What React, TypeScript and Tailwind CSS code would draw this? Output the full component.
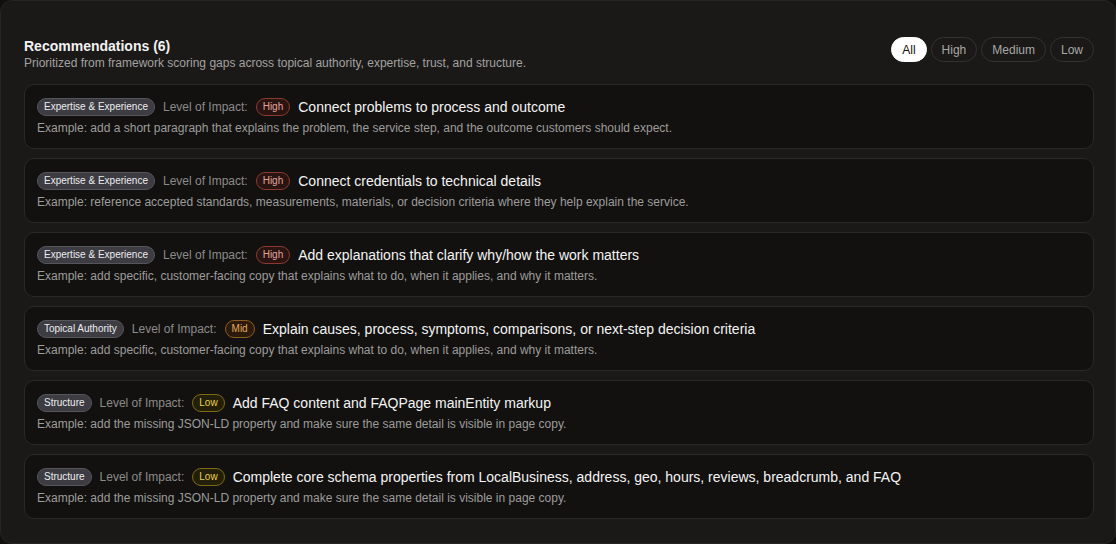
import React from "react";

type Impact = "High" | "Mid" | "Low";
type Rec = { cat: string; impact: Impact; title: string; example: string };

const recs: Rec[] = [
  {
    cat: "Expertise & Experience",
    impact: "High",
    title: "Connect problems to process and outcome",
    example:
      "Example: add a short paragraph that explains the problem, the service step, and the outcome customers should expect.",
  },
  {
    cat: "Expertise & Experience",
    impact: "High",
    title: "Connect credentials to technical details",
    example:
      "Example: reference accepted standards, measurements, materials, or decision criteria where they help explain the service.",
  },
  {
    cat: "Expertise & Experience",
    impact: "High",
    title: "Add explanations that clarify why/how the work matters",
    example:
      "Example: add specific, customer-facing copy that explains what to do, when it applies, and why it matters.",
  },
  {
    cat: "Topical Authority",
    impact: "Mid",
    title: "Explain causes, process, symptoms, comparisons, or next-step decision criteria",
    example:
      "Example: add specific, customer-facing copy that explains what to do, when it applies, and why it matters.",
  },
  {
    cat: "Structure",
    impact: "Low",
    title: "Add FAQ content and FAQPage mainEntity markup",
    example:
      "Example: add the missing JSON-LD property and make sure the same detail is visible in page copy.",
  },
  {
    cat: "Structure",
    impact: "Low",
    title:
      "Complete core schema properties from LocalBusiness, address, geo, hours, reviews, breadcrumb, and FAQ",
    example:
      "Example: add the missing JSON-LD property and make sure the same detail is visible in page copy.",
  },
];

function ImpactBadge({ impact }: { impact: Impact }) {
  if (impact === "High")
    return (
      <span className="inline-flex h-[18px] items-center rounded-full border border-[#8a3a2f] bg-[#2a1411] px-[6px] text-[10px] leading-none text-[#e0a49a]">
        High
      </span>
    );
  if (impact === "Mid")
    return (
      <span className="inline-flex h-[18px] items-center rounded-full border border-[#8f5a1f] bg-[#2b1a09] px-[6px] text-[10px] leading-none text-[#e8a860]">
        Mid
      </span>
    );
  return (
    <span className="inline-flex h-[18px] items-center rounded-full border border-[#7d6b12] bg-[#231f07] px-[6px] text-[10px] leading-none text-[#e6cf57]">
      Low
    </span>
  );
}

export default function App() {
  return (
    <div
      className="h-[544px] w-[1116px] bg-[#0f0f0f]"
      style={{ fontFamily: '"Liberation Sans", Arial, sans-serif' }}
    >
      <div className="flex h-full w-full flex-col rounded-xl border border-[#262524] bg-[#1a1918] pl-[23px] pr-[21px] pt-[35px]">
        <div className="flex items-start justify-between">
          <div>
            <h2 className="text-[14px] font-bold leading-[20px] text-[#f2f2f2]">
              Recommendations (6)
            </h2>
            <p className="text-[12px] leading-[15px] text-[#a3a2a0]">
              Prioritized from framework scoring gaps across topical authority, expertise, trust, and structure.
            </p>
          </div>
          <div className="mt-[1px] flex gap-[4px]">
            <button className="h-[25px] rounded-full border border-white bg-white px-[10px] text-[12px] text-[#111]">
              All
            </button>
            <button className="h-[25px] rounded-full border border-[#333231] px-[10px] text-[12px] text-[#a8a7a5]">
              High
            </button>
            <button className="h-[25px] rounded-full border border-[#333231] px-[10px] text-[12px] text-[#a8a7a5]">
              Medium
            </button>
            <button className="h-[25px] rounded-full border border-[#333231] px-[10px] text-[12px] text-[#a8a7a5]">
              Low
            </button>
          </div>
        </div>
        <div className="mt-[13px] flex flex-col gap-[9px]">
          {recs.map((r, i) => (
            <div
              key={i}
              className="flex h-[65px] flex-col rounded-[10px] border border-[#2a2928] bg-[#121110] px-[12px] pt-[12px]"
            >
              <div className="flex h-[20px] items-center">
                <span className="inline-flex h-[18px] items-center rounded-full border border-[#55555c] bg-[#3c3c42] px-[6px] text-[10px] leading-none text-[#ececef]">
                  {r.cat}
                </span>
                <span className="ml-[8px] text-[12px] text-[#8c8b89]">Level of Impact:</span>
                <span className="ml-[8px] flex">
                  <ImpactBadge impact={r.impact} />
                </span>
                <span className="ml-[8px] text-[14px] text-[#f4f4f4]">{r.title}</span>
              </div>
              <p className="mt-[3px] text-[12px] leading-[16px] text-[#9d9c9a]">{r.example}</p>
            </div>
          ))}
        </div>
      </div>
    </div>
  );
}
